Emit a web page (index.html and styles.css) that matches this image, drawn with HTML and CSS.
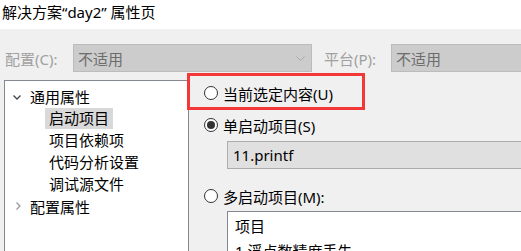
FILE: index.html
```html
<!DOCTYPE html>
<html lang="zh-cn">
<head>
  <meta charset="UTF-8">
  <meta name="viewport" content="width=device-width, initial-scale=1.0">
  <title>解决方案属性页</title>
  <link rel="stylesheet" href="styles.css">
</head>
<body>

  <div class="title-bar">解决方案“day2” 属性页</div>

  <div class="dialog">
    <!-- Configuração / plataforma -->
    <div class="config-row">
      <span class="config-label">配置(C):</span>
      <div class="combo combo-config">
        <span>不适用</span>
        <svg class="combo-arrow" width="9" height="5" viewBox="0 0 9 5"><path d="M0.5 0.5 L4.5 4.5 L8.5 0.5" fill="none" stroke="#a8a8a8" stroke-width="1"/></svg>
      </div>
      <span class="config-label platform-label">平台(P):</span>
      <div class="combo combo-platform"><span>不适用</span></div>
    </div>

    <div class="content">
      <!-- Árvore -->
      <div class="tree">
        <div class="tree-item">
          <svg class="chevron" width="8" height="5" viewBox="0 0 8 5"><path d="M0.5 0.5 L4 4 L7.5 0.5" fill="none" stroke="#444" stroke-width="1.3"/></svg>
          <span>通用属性</span>
        </div>
        <div class="tree-item child"><span class="selected">启动项目</span></div>
        <div class="tree-item child"><span>项目依赖项</span></div>
        <div class="tree-item child"><span>代码分析设置</span></div>
        <div class="tree-item child"><span>调试源文件</span></div>
        <div class="tree-item">
          <svg class="chevron chevron-right" width="5" height="8" viewBox="0 0 5 8"><path d="M0.5 0.5 L4 4 L0.5 7.5" fill="none" stroke="#999" stroke-width="1.3"/></svg>
          <span>配置属性</span>
        </div>
      </div>

      <!-- Painel direito -->
      <div class="pane">
        <label class="radio-row first">
          <span class="radio"></span>当前选定内容(U)
        </label>
        <label class="radio-row second">
          <span class="radio checked"></span>单启动项目(S)
        </label>
        <div class="textbox">11.printf</div>
        <label class="radio-row third">
          <span class="radio"></span>多启动项目(M):
        </label>
        <div class="listbox">
          <div class="list-head">项目</div>
          <div class="list-row">1.浮点数精度丢失</div>
        </div>
      </div>
    </div>

    <!-- marcação vermelha -->
    <div class="highlight-box"></div>
  </div>

</body>
</html>
```

FILE: styles.css
```css
* {
  margin: 0;
  padding: 0;
  box-sizing: border-box;
}

body {
  font-family: "Noto Sans", "Noto Sans CJK SC", sans-serif;
  font-size: 15px;
  color: #000;
  background-color: #f0f0f0;
  width: 521px;
  height: 251px;
  overflow: hidden;
}

.title-bar {
  height: 29px;
  background-color: white;
  padding-left: 2px;
  line-height: 24px;
}

.dialog {
  position: relative;
  height: 222px;
  overflow: hidden;
}

.config-row {
  display: flex;
  align-items: center;
  padding-top: 15px;
  height: 43px;
}

.config-label {
  color: #a0a0a0;
  width: 73px;
  padding-left: 5px;
}

.platform-label {
  width: 79px;
  padding-left: 12px;
}

.combo {
  height: 28px;
  background-color: #cccccc;
  border: 1px solid #bcbcbc;
  color: #6d6d6d;
  padding-left: 4px;
  display: flex;
  align-items: center;
  justify-content: space-between;
}

.combo-config {
  width: 239px;
}

.combo-arrow {
  margin-right: 6px;
}

.combo-platform {
  flex: 1;
  margin-right: -4px;
}

.content {
  display: flex;
  margin-top: 8px;
}

.tree {
  margin-left: 4px;
  width: 185px;
  height: 200px;
  background-color: white;
  border: 1px solid #828790;
  padding-top: 4px;
}

.tree-item {
  height: 22px;
  display: flex;
  align-items: center;
  padding-left: 25px;
  position: relative;
}

.tree-item .chevron {
  position: absolute;
  left: 8px;
  top: 10px;
}

.tree-item .chevron-right {
  left: 11px;
  top: 7px;
}

.tree-item.child {
  padding-left: 40px;
}

.tree-item.child span {
  padding: 0 4px;
  line-height: 21px;
}

.tree-item .selected {
  background-color: #d9d9d9;
}

.pane {
  flex: 1;
  padding-left: 15px;
  display: flex;
  flex-direction: column;
}

.radio-row {
  display: flex;
  align-items: center;
  height: 22px;
}

.radio-row.first {
  margin-top: 2px;
}

.radio-row.second {
  margin-top: 10px;
}

.radio-row.third {
  margin-top: 16px;
}

.radio {
  width: 14px;
  height: 14px;
  border: 1px solid #333;
  border-radius: 50%;
  background-color: white;
  margin-right: 5px;
  display: flex;
  align-items: center;
  justify-content: center;
}

.radio.checked::after {
  content: "";
  width: 8px;
  height: 8px;
  border-radius: 50%;
  background-color: #333;
}

.textbox {
  margin-top: 5px;
  margin-left: 23px;
  height: 28px;
  background-color: #e0e0e0;
  border: 1px solid #adadad;
  border-right: none;
  padding-left: 5px;
  line-height: 26px;
}

.listbox {
  margin-top: 4px;
  margin-left: 23px;
  height: 60px;
  background-color: white;
  border: 1px solid #828790;
  border-right: none;
  padding-left: 7px;
  padding-top: 3px;
}

.list-head {
  height: 25px;
  line-height: 22px;
}

.list-row {
  height: 22px;
  line-height: 22px;
}

.highlight-box {
  position: absolute;
  left: 187px;
  top: 44px;
  width: 178px;
  height: 37px;
  border: 3px solid #f23838;
}
```
